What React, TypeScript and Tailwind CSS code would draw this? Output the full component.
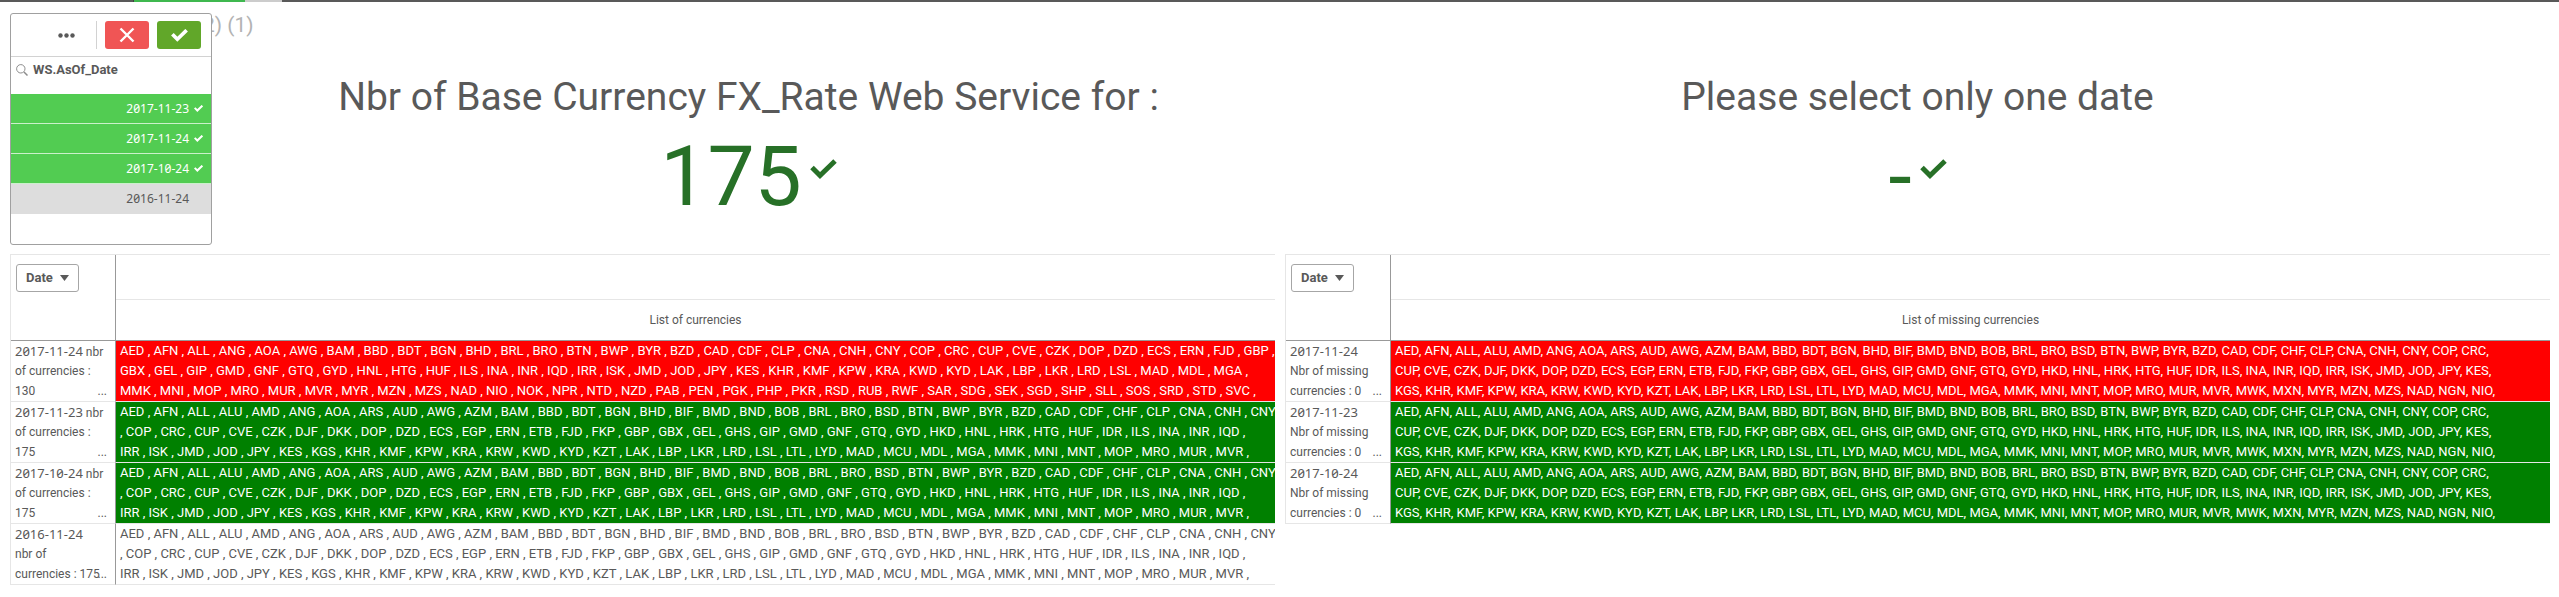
import type { ReactNode } from "react";

type Tone = "red" | "green" | "plain";

interface Row {
  date: string;
  label: string[];
  tone: Tone;
  lines: string[];
}

const toneClass: Record<Tone, string> = {
  red: "bg-[#ff0000] text-white",
  green: "bg-[#008000] text-white",
  plain: "bg-white text-[#595959]",
};

const fullList = [
  "AED , AFN , ALL , ALU , AMD , ANG , AOA , ARS , AUD , AWG , AZM , BAM , BBD , BDT , BGN , BHD , BIF , BMD , BND , BOB , BRL , BRO , BSD , BTN , BWP , BYR , BZD , CAD , CDF , CHF , CLP , CNA , CNH , CNY",
  ", COP , CRC , CUP , CVE , CZK , DJF , DKK , DOP , DZD , ECS , EGP , ERN , ETB , FJD , FKP , GBP , GBX , GEL , GHS , GIP , GMD , GNF , GTQ , GYD , HKD , HNL , HRK , HTG , HUF , IDR , ILS , INA , INR , IQD ,",
  "IRR , ISK , JMD , JOD , JPY , KES , KGS , KHR , KMF , KPW , KRA , KRW , KWD , KYD , KZT , LAK , LBP , LKR , LRD , LSL , LTL , LYD , MAD , MCU , MDL , MGA , MMK , MNI , MNT , MOP , MRO , MUR , MVR ,",
];

const shortList = [
  "AED , AFN , ALL , ANG , AOA , AWG , BAM , BBD , BDT , BGN , BHD , BRL , BRO , BTN , BWP , BYR , BZD , CAD , CDF , CLP , CNA , CNH , CNY , COP , CRC , CUP , CVE , CZK , DOP , DZD , ECS , ERN , FJD , GBP ,",
  "GBX , GEL , GIP , GMD , GNF , GTQ , GYD , HNL , HTG , HUF , ILS , INA , INR , IQD , IRR , ISK , JMD , JOD , JPY , KES , KHR , KMF , KPW , KRA , KWD , KYD , LAK , LBP , LKR , LRD , LSL , MAD , MDL , MGA ,",
  "MMK , MNI , MOP , MRO , MUR , MVR , MYR , MZN , MZS , NAD , NIO , NOK , NPR , NTD , NZD , PAB , PEN , PGK , PHP , PKR , RSD , RUB , RWF , SAR , SDG , SEK , SGD , SHP , SLL , SOS , SRD , STD , SVC ,",
];

const missingList = [
  "AED, AFN, ALL, ALU, AMD, ANG, AOA, ARS, AUD, AWG, AZM, BAM, BBD, BDT, BGN, BHD, BIF, BMD, BND, BOB, BRL, BRO, BSD, BTN, BWP, BYR, BZD, CAD, CDF, CHF, CLP, CNA, CNH, CNY, COP, CRC,",
  "CUP, CVE, CZK, DJF, DKK, DOP, DZD, ECS, EGP, ERN, ETB, FJD, FKP, GBP, GBX, GEL, GHS, GIP, GMD, GNF, GTQ, GYD, HKD, HNL, HRK, HTG, HUF, IDR, ILS, INA, INR, IQD, IRR, ISK, JMD, JOD, JPY, KES,",
  "KGS, KHR, KMF, KPW, KRA, KRW, KWD, KYD, KZT, LAK, LBP, LKR, LRD, LSL, LTL, LYD, MAD, MCU, MDL, MGA, MMK, MNI, MNT, MOP, MRO, MUR, MVR, MWK, MXN, MYR, MZN, MZS, NAD, NGN, NIO,",
];

const currencyRows: Row[] = [
  { date: "2017-11-24", label: [" nbr", "of currencies :", "130"], tone: "red", lines: shortList },
  { date: "2017-11-23", label: [" nbr", "of currencies :", "175"], tone: "green", lines: fullList },
  { date: "2017-10-24", label: [" nbr", "of currencies :", "175"], tone: "green", lines: fullList },
  { date: "2016-11-24", label: ["", "nbr of", "currencies : 175"], tone: "plain", lines: fullList },
];

const missingLabel = ["", "Nbr of missing", "currencies : 0"];
const missingRows: Row[] = [
  { date: "2017-11-24", label: missingLabel, tone: "red", lines: missingList },
  { date: "2017-11-23", label: missingLabel, tone: "green", lines: missingList },
  { date: "2017-10-24", label: missingLabel, tone: "green", lines: missingList },
];

const dates = [
  { value: "2017-11-23", selected: true },
  { value: "2017-11-24", selected: true },
  { value: "2017-10-24", selected: true },
  { value: "2016-11-24", selected: false },
];

function Check({ className, width = 5 }: { className: string; width?: number }) {
  return (
    <svg viewBox="0 0 27 21" className={className} fill="none" stroke="currentColor" strokeWidth={width} aria-hidden="true">
      <path d="M2 8.5 L10 16.5 L25 2" />
    </svg>
  );
}

function DateFilter() {
  return (
    <section className="absolute top-[13px] left-[10px] z-10 h-[232px] w-[202px] overflow-hidden rounded-[3px] border border-[#a0a0a0] bg-white">
      <div className="flex h-[43px] items-center border-b border-[#d2d2d2] pr-[10px]">
        <button type="button" aria-label="More" className="ml-auto flex h-7 w-[38px] items-center justify-center text-[#595959]">
          <svg viewBox="0 0 17 5" className="h-[5px] w-[17px]" fill="currentColor" aria-hidden="true">
            <circle cx="2.5" cy="2.5" r="2.2" />
            <circle cx="8.5" cy="2.5" r="2.2" />
            <circle cx="14.5" cy="2.5" r="2.2" />
          </svg>
        </button>
        <span className="ml-[11px] h-7 w-px bg-[#d2d2d2]" />
        <button type="button" aria-label="Cancel selection" className="ml-2 flex h-7 w-11 items-center justify-center rounded-[3px] bg-[#f05555] text-white">
          <svg viewBox="0 0 16 16" className="size-4" stroke="currentColor" strokeWidth="2.4" aria-hidden="true">
            <path d="M1.5 1.5 L14.5 14.5 M14.5 1.5 L1.5 14.5" />
          </svg>
        </button>
        <button type="button" aria-label="Confirm selection" className="ml-2 flex h-7 w-11 items-center justify-center rounded-[3px] bg-[#61a729] text-white">
          <Check className="h-[13px] w-[17px]" width={6} />
        </button>
      </div>
      <div className="flex h-[37px] gap-[5px] pt-[6px] pl-[5px]">
        <svg viewBox="0 0 12 12" className="mt-px size-3" fill="none" stroke="#8c8c8c" aria-hidden="true">
          <circle cx="4.8" cy="4.8" r="4.2" />
          <path d="M8 8 L11.5 11.5" strokeWidth="1.5" />
        </svg>
        <h2 className="text-[13px] leading-[14px] font-bold">WS.AsOf_Date</h2>
      </div>
      <ul className="font-['Noto_Sans'] text-xs slashed-zero">
        {dates.map((d) => (
          <li
            key={d.value}
            className={
              d.selected
                ? "flex h-[30px] items-center justify-end border-b border-white/70 bg-[#52cc52] pr-2 text-white"
                : "flex h-[30px] items-center justify-end bg-[#dddddd] pr-2 text-[#595959]"
            }
          >
            {d.value}
            <span className="ml-[5px] flex w-[9px]">{d.selected && <Check className="h-[7px] w-[9px]" width={6} />}</span>
          </li>
        ))}
      </ul>
    </section>
  );
}

function Kpi({ title, value }: { title: string; value: ReactNode }) {
  return (
    <section className="flex flex-col items-center pt-[73px]">
      <h2 className="text-[39px] leading-[44px] whitespace-nowrap">{title}</h2>
      <div className="mt-2 flex text-[#277027]">
        <span className="text-[84px] leading-[100px]">{value}</span>
        <Check className="mt-8 ml-2 h-[21px] w-[27px]" />
      </div>
    </section>
  );
}

function PivotTable({ heading, rows }: { heading: string; rows: Row[] }) {
  return (
    <table className="w-full table-fixed border-separate border-spacing-0 border-t border-l border-[#e6e6e6] text-xs">
      <colgroup>
        <col className="w-[105px]" />
        <col />
      </colgroup>
      <thead>
        <tr>
          <th rowSpan={2} className="border-r border-b border-[#999999] pt-[9px] pl-[5px] text-left align-top">
            <button type="button" className="flex h-7 w-[63px] items-center justify-between rounded-[3px] border border-[#a6a6a6] px-[9px] text-[13px] font-bold">
              Date
              <svg viewBox="0 0 9 6" className="h-[6px] w-[9px]" fill="currentColor" aria-hidden="true">
                <path d="M0 0 H9 L4.5 6 Z" />
              </svg>
            </button>
          </th>
          <td className="h-[45px] border-b border-[#e6e6e6]" />
        </tr>
        <tr>
          <th className="h-[41px] border-b border-[#999999] text-center font-normal">{heading}</th>
        </tr>
      </thead>
      <tbody>
        {rows.map((row) => (
          <tr key={row.date}>
            <th scope="row" className="border-r border-b border-r-[#999999] border-b-[#e6e6e6] p-0 text-left font-normal">
              <div className="relative pl-1 leading-5 whitespace-nowrap">
                {row.label.map((text, i) => (
                  <div key={i} className="h-5">
                    {i === 0 && <span className="font-['Noto_Sans'] text-[13px] slashed-zero">{row.date}</span>}
                    {text}
                  </div>
                ))}
                <span className="absolute right-2 bottom-0">...</span>
              </div>
            </th>
            <td className={`overflow-hidden border-b border-[#e6e6e6] p-0 pl-1 text-[13px] ${toneClass[row.tone]}`}>
              {row.lines.map((line) => (
                <div key={line} className="h-5 leading-5 whitespace-nowrap">
                  {line}
                </div>
              ))}
            </td>
          </tr>
        ))}
      </tbody>
    </table>
  );
}

export default function App() {
  return (
    <div className="relative bg-white font-[Roboto,sans-serif] text-[#595959]">
      <div className="flex h-[2px] bg-[#595959]">
        <span className="ml-[133px] w-px bg-[#404040]" />
        <span className="w-[111px] bg-[#3fb84f]" />
        <span className="w-[37px] bg-[#cccccc]" />
      </div>
      <p className="absolute top-[11px] left-[203px] text-[21px] leading-7 whitespace-nowrap text-[#b3b3b3]">2) (1)</p>
      <DateFilter />
      <main className="pr-[9px] pl-[10px]">
        <div className="grid h-[252px] grid-cols-2 gap-[10px]">
          <div className="pl-[212px]">
            <Kpi title="Nbr of Base Currency FX_Rate Web Service for :" value="175" />
          </div>
          <Kpi title="Please select only one date" value="-" />
        </div>
        <div className="grid grid-cols-2 items-start gap-[10px]">
          <PivotTable heading="List of currencies" rows={currencyRows} />
          <PivotTable heading="List of missing currencies" rows={missingRows} />
        </div>
      </main>
    </div>
  );
}
